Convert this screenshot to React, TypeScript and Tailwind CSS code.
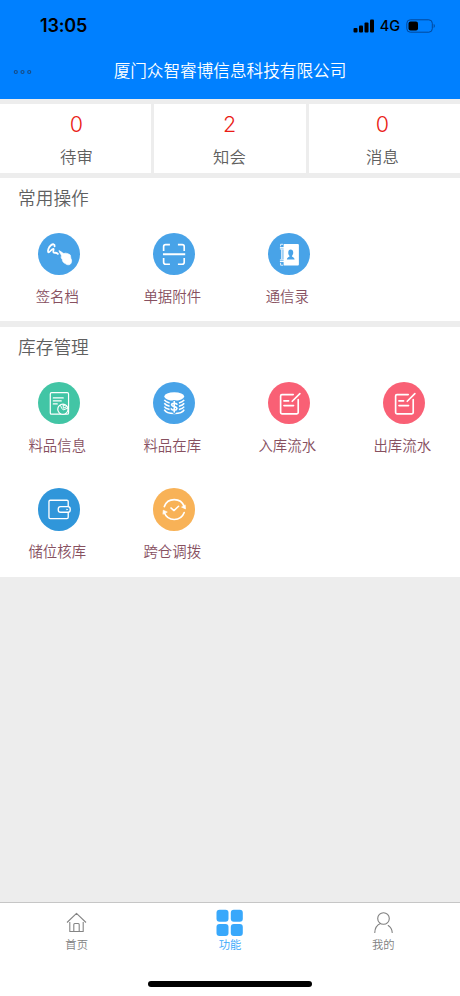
import type { ReactNode } from "react";

const stroke = {
  fill: "none",
  stroke: "#fff",
  strokeWidth: 5,
  strokeLinecap: "round" as const,
  strokeLinejoin: "round" as const,
};

const SignIcon = () => (
  <>
    <path {...stroke} strokeWidth={5.5} d="M50 40 C51 33 45 32 39 37 C32 43 28 54 31 58 C35 60 39 49 46 48 C49 47 44 56 47 59 C50 61 54 57 60 63" />
    <path fill="#fff" stroke="#fff" strokeWidth={2} strokeLinejoin="round" d="M63 53 C67 54 73 60 78 62 C83 59 91 62 97 66 C99 71 98 76 101 81 C102 87 100 92 96 95 C90 97 86 95 82 92 C76 90 73 84 73 79 C69 76 69 71 71 69 C69 64 64 58 63 53Z" />
  </>
);

const ScanIcon = () => (
  <g {...stroke} strokeLinecap="butt">
    <path d="M32 54 V41 Q32 35 38 35 H51 M75 35 H88 Q94 35 94 41 V54 M32 75 V88 Q32 94 38 94 H51 M75 94 H88 Q94 94 94 88 V75" />
    <path strokeWidth={6} d="M30 64 H97" />
  </g>
);

const BookIcon = ({ color }: { color: string }) => (
  <>
    <path fill="#fff" d="M47 33 H90 Q93 33 93 36 V95 Q93 98 90 98 H47Z" />
    <path {...stroke} strokeWidth={2.5} d="M38 39 V34 H44 M41 50 V78 M45 50 V78 M38 91 V97 H44" />
    <path {...stroke} strokeWidth={3} d="M37 44 H47 M37 48 H47 M37 81 H47 M37 86 H47" />
    <path fill={color} d="M68 50 C73 50 76 54 76 59 C76 64 74 67 72 69 C72 73 80 72 80 80 H57 C57 72 65 73 65 69 C62 67 61 64 61 59 C61 54 64 50 68 50Z" />
  </>
);

const ReportIcon = ({ color }: { color: string }) => (
  <g {...stroke} strokeWidth={3.6}>
    <rect x="37" y="32" width="55" height="65" rx="4" />
    <path d="M46 48 H76 M46 57 H70 M46 66 H58" />
    <circle cx="75" cy="82" r="15.5" fill={color} />
    <path d="M68 71 Q70 80 76 84 L89 79 M76 69 V79 L86 75 Q83 69 76 69Z" strokeWidth={3} />
  </g>
);

const CoinsIcon = ({ color }: { color: string }) => (
  <>
    <ellipse cx="64" cy="43.500" rx="30" ry="12.500" fill="#fff" />
    <g {...stroke} strokeWidth={4.5} strokeLinecap="butt">
      <path d="M34 54 Q38 60 50 63 M94 54 Q90 60 78 63" />
      <path d="M34 64 Q38 70 50 73 M94 64 Q90 70 78 73" />
      <path d="M34 74 Q38 80 50 83 M94 74 Q90 80 78 83" />
      <path d="M34 83 Q40 95 64 95 Q88 95 94 83" />
    </g>
    <path {...stroke} stroke={color} strokeWidth={11} d="M64 60 V91" />
    <path {...stroke} strokeWidth={5} d="M72 67 Q70 64 64 64 Q56 64 56 69 Q57 73 64 74 Q72 76 72 80 Q71 85 64 85 Q57 85 55 81 M64 59 V90" />
  </>
);

const EditIcon = () => (
  <g {...stroke} strokeWidth={5}>
    <path d="M76 38 H42 Q38 38 38 42 V92 Q38 96 42 96 H87 Q91 96 91 92 V53" />
    <path d="M73 58 L96 35 M48 57 H62 M48 71 H77" />
  </g>
);

const WalletIcon = ({ color }: { color: string }) => (
  <g {...stroke} strokeWidth={4}>
    <rect x="33" y="37" width="58" height="55" rx="4" />
    <rect x="61" y="56" width="36" height="17" rx="7" fill={color} />
    <circle cx="87" cy="64.500" r="1.200" strokeWidth={2} />
  </g>
);

const TransferIcon = () => (
  <g {...stroke} strokeWidth={5}>
    <path d="M34 56 A32 32 0 0 1 94 56" />
    <path d="M34 74 A32 32 0 0 0 94 74" />
    <path strokeWidth={4.5} d="M54 60 L63 68 L77 55" />
    <path fill="#fff" strokeWidth={2} d="M87 58 L98 63 L97 52Z M30 78 L31 67 L42 72Z" />
  </g>
);

type Item = { label: string; bg: string; icon: ReactNode };

const common: Item[] = [
  { label: "签名档", bg: "bg-[#48a3e8]", icon: <SignIcon /> },
  { label: "单据附件", bg: "bg-[#48a3e8]", icon: <ScanIcon /> },
  { label: "通信录", bg: "bg-[#48a3e8]", icon: <BookIcon color="#48a3e8" /> },
];

const stock: Item[] = [
  { label: "料品信息", bg: "bg-[#42c5a5]", icon: <ReportIcon color="#42c5a5" /> },
  { label: "料品在库", bg: "bg-[#48a3e8]", icon: <CoinsIcon color="#48a3e8" /> },
  { label: "入库流水", bg: "bg-[#f96075]", icon: <EditIcon /> },
  { label: "出库流水", bg: "bg-[#f96075]", icon: <EditIcon /> },
  { label: "储位核库", bg: "bg-[#3096da]", icon: <WalletIcon color="#3096da" /> },
  { label: "跨仓调拨", bg: "bg-[#f8b257]", icon: <TransferIcon /> },
];

const Section = ({ title, items, height }: { title: string; items: Item[]; height: string }) => (
  <section className={`bg-white ${height}`}>
    <h2 className="h-[54.500px] pt-[6px] pl-[18px] text-[17.700px] leading-[26px] text-[#606060]">{title}</h2>
    <div className="grid grid-cols-4">
      {items.map((item) => (
        <div key={item.label} className="flex h-[106.500px] flex-col items-center">
          <div className={`ml-[3px] size-[42.500px] shrink-0 rounded-full ${item.bg}`}>
            <svg viewBox="0 0 128 128" className="size-full">{item.icon}</svg>
          </div>
          <span className="mt-[10.500px] mr-[0.500px] text-[14.400px] leading-[20px] text-[#87505f]">{item.label}</span>
        </div>
      ))}
    </div>
  </section>
);

const stats = [
  { value: 0, label: "待审", pad: "pl-[2px]" },
  { value: 2, label: "知会", pad: "pr-[1px]" },
  { value: 0, label: "消息", pad: "pr-[4px]" },
];

export default function App() {
  return (
    <div className="flex h-[996px] w-[460px] flex-col overflow-hidden bg-[#ededed] font-['Noto_Sans_CJK_SC',sans-serif] font-[350]">
      <header className="h-[99px] shrink-0 bg-[#0080ff]">
        <div className="flex h-[50px] items-center pt-[2px] pr-[24px] pl-[40px] text-black">
          <span className="font-[Inter,sans-serif] text-[18px] leading-none font-semibold tracking-[-0.200px]">13:05</span>
          <svg className="ml-auto h-[14px] w-[22px]" viewBox="0 0 22 14">
            <rect x="0.500" y="9" width="4" height="4.500" rx="1" />
            <rect x="6" y="6.500" width="4" height="7" rx="1" />
            <rect x="11.500" y="3.500" width="4" height="10" rx="1" />
            <rect x="17" y="0.500" width="4" height="13" rx="1" />
          </svg>
          <span className="ml-[5px] font-[Inter,sans-serif] text-[14.500px] leading-none font-medium">4G</span>
          <svg className="ml-[6px] h-[14px] w-[30px]" viewBox="0 0 30 14">
            <rect x="0.800" y="0.800" width="25.500" height="12.400" rx="3.500" fill="none" stroke="#00479a" />
            <rect x="2.500" y="2.500" width="9.500" height="9" rx="2" />
            <path d="M27.700 4.800 Q30 7 27.700 9.200Z" fill="#00479a" />
          </svg>
        </div>
        <div className="grid h-[40px] grid-cols-[100px_1fr_100px] items-center">
          <svg className="mt-[3px] ml-[13px] h-[6px] w-[20px]" viewBox="0 0 20 6" fill="none" stroke="#164e89" strokeWidth="1.200">
            <circle cx="2.800" cy="3" r="1.500" />
            <circle cx="9.500" cy="3" r="1.500" />
            <circle cx="16.200" cy="3" r="1.500" />
          </svg>
          <h1 className="text-center text-[16.640px] leading-[24px] whitespace-nowrap text-white">厦门众智睿博信息科技有限公司</h1>
        </div>
      </header>

      <div className="mt-[5px] grid h-[69px] shrink-0 grid-cols-[151px_152px_151px] gap-x-[3px]">
        {stats.map((s) => (
          <div key={s.label} className={`flex flex-col items-center bg-white pt-[8px] ${s.pad}`}>
            <span className="font-[Inter,sans-serif] text-[21.500px] leading-[24px] font-light text-[#ea1c16]">{s.value}</span>
            <span className="mt-[8px] text-[16.400px] leading-[24px] text-[#606060]">{s.label}</span>
          </div>
        ))}
      </div>

      <div className="mt-[5px] flex shrink-0 flex-col gap-[6px]">
        <Section title="常用操作" items={common} height="h-[143px]" />
        <Section title="库存管理" items={stock} height="h-[250px]" />
      </div>

      <nav className="mt-auto h-[94px] shrink-0 border-t border-[#c6c6c6] bg-white">
        <div className="grid h-[77px] grid-cols-3 text-[11.300px] leading-[16px] text-[#808080]">
          <div className="flex flex-col items-center pt-[6px]">
            <svg className="size-[27px]" viewBox="0 0 27 27" fill="none" stroke="#858585" strokeWidth="1.100" strokeLinejoin="round">
              <path d="M4 13.500 L13.500 4.300 L23 13.500 M6.800 13 V22.500 H20.200 V13 M10.800 22.500 V15.500 Q10.800 14.500 11.800 14.500 H15.200 Q16.200 14.500 16.200 15.500 V22.500" />
            </svg>
            <span>首页</span>
          </div>
          <div className="flex flex-col items-center pt-[6px] text-[#38a8fb]">
            <svg className="size-[27px]" viewBox="0 0 27 27" fill="#38a8fb">
              <rect x="0.500" y="0.700" width="12" height="12" rx="3" />
              <rect x="14.800" y="0.700" width="12" height="12" rx="3" />
              <rect x="0.500" y="15" width="12" height="12" rx="3" />
              <rect x="14.800" y="15" width="12" height="12" rx="3" />
            </svg>
            <span>功能</span>
          </div>
          <div className="flex flex-col items-center pt-[6px]">
            <svg className="size-[27px]" viewBox="0 0 27 27" fill="none" stroke="#808080" strokeWidth="1.100" strokeLinecap="round">
              <circle cx="13.500" cy="9.500" r="5.800" />
              <path d="M4.800 23.500 Q5 17 10.500 14.600 M18.200 16.500 Q22 19 22.200 23.500" />
            </svg>
            <span>我的</span>
          </div>
        </div>
        <div className="mx-auto mt-[1px] h-[6px] w-[164px] rounded-full bg-black" />
      </nav>
    </div>
  );
}
